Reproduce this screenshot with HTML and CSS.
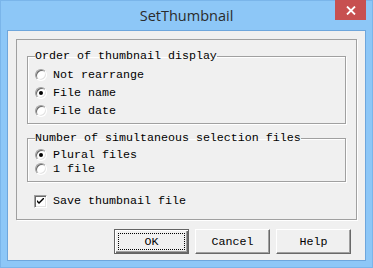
FILE: index.html
```html
<!DOCTYPE html>
<html>
<head>
<meta charset="utf-8">
<link rel="stylesheet" href="styles.css">
</head>
<body>
<div class="window">
  <div class="titlebar">
    <span class="title">SetThumbnail</span>
    <div class="close"><svg width="10" height="9" viewBox="0 0 10 9"><path d="M1 0.5 L9 8.5 M9 0.5 L1 8.5" stroke="#fff" stroke-width="1.8"/></svg></div>
  </div>
  <div class="client">
    <div class="panel">
      <fieldset class="group order">
        <legend>Order of thumbnail display</legend>
        <label class="opt"><span class="radio"></span>Not rearrange</label>
        <label class="opt"><span class="radio on"></span>File name</label>
        <label class="opt"><span class="radio"></span>File date</label>
      </fieldset>
      <fieldset class="group number">
        <legend>Number of simultaneous selection files</legend>
        <label class="opt"><span class="radio on"></span>Plural files</label>
        <label class="opt"><span class="radio"></span>1 file</label>
      </fieldset>
      <label class="check"><span class="box"><svg width="7" height="7" viewBox="0 0 7 7"><path d="M0 2 L0 4 L2 6 L7 1 L7 -1 L2 4 Z" fill="#000"/></svg></span>Save thumbnail file</label>
    </div>
    <div class="buttons">
      <div class="btn default"><span class="focus">OK</span></div>
      <div class="btn">Cancel</div>
      <div class="btn">Help</div>
    </div>
  </div>
</div>
</body>
</html>
```
FILE: styles.css
```css
* { box-sizing: border-box; }
html, body { margin: 0; padding: 0; }
body { background: #8dc7f7; }
.window {
  width: 373px; height: 268px;
  border: 1px solid #7ab5ea;
  background: #8dc7f7;
  padding: 0 6px 6px;
  display: flex; flex-direction: column;
  font-family: "Liberation Mono", monospace;
  font-size: 11.67px;
  color: #000;
}
.titlebar {
  height: 29px;
  display: grid;
  grid-template-columns: 1fr auto 1fr;
}
.title {
  grid-column: 2;
  align-self: center;
  font-family: "Open Sans", "Noto Sans", sans-serif;
  font-size: 14.5px;
  color: #2b2b2b;
  margin-top: -1px;
}
.close {
  grid-column: 3;
  justify-self: end;
  width: 31px; height: 20px;
  margin-top: -1px;
  background: #c75050;
  display: flex; align-items: center; justify-content: center;
}
.close svg { display: block; }
.client {
  flex: 1;
  border: 1px solid #6ea6dc;
  background: #f0f0f0;
  padding: 8px 8px 0 8px;
  display: flex; flex-direction: column;
}
.panel {
  height: 181px;
  border: 1px solid #a0a0a0;
  box-shadow: 1px 1px 0 #fff;
  padding: 9px 10px 0 10px;
  display: flex; flex-direction: column;
}
.group {
  margin: 0;
  padding: 3px 0 3px 0;
  border: 1px solid #a0a0a0;
  box-shadow: 1px 1px 0 #fff, inset 1px 1px 0 #fff;
  display: flex; flex-direction: column;
}
.group legend {
  padding: 0;
  margin-left: 7px;
  line-height: 14px;
}
.group.number { margin-top: 7px; padding-bottom: 5px; }
.opt {
  display: flex; align-items: center;
  height: 18px;
  padding-left: 7px;
  gap: 6px;
  line-height: 14px;
}
.number .opt { height: 14px; }
.radio {
  width: 12px; height: 12px;
  border-radius: 50%;
  background: #fff;
  border: 1px solid;
  border-color: #a0a0a0 #fff #fff #a0a0a0;
  box-shadow: inset 1px 1px 0 #696969, inset -1px -1px 0 #e3e3e3;
  display: flex; align-items: center; justify-content: center;
  flex: none;
}
.radio.on::after {
  content: "";
  width: 4px; height: 4px;
  border-radius: 50%;
  background: #000;
}
.check {
  display: flex; align-items: center;
  height: 14px;
  margin-top: 12px;
  padding-left: 7px;
  gap: 6px;
}
.box {
  width: 13px; height: 13px;
  background: #fff;
  border: 1px solid;
  border-color: #a0a0a0 #fff #fff #a0a0a0;
  box-shadow: inset 1px 1px 0 #696969, inset -1px -1px 0 #e3e3e3;
  display: flex; align-items: center; justify-content: center;
  flex: none;
}
.box svg { display: block; }
.buttons {
  display: flex; justify-content: flex-end;
  gap: 6px;
  margin-top: 9px;
  padding-right: 6px;
}
.btn {
  width: 75px; height: 25px;
  background: #f0f0f0;
  border: 1px solid;
  border-color: #fff #696969 #696969 #fff;
  box-shadow: inset -1px -1px 0 #a0a0a0;
  display: flex; align-items: center; justify-content: center;
  line-height: 14px;
}
.btn.default {
  border: 1px solid #646464;
  box-shadow: inset 1px 1px 0 #fff, inset -1px -1px 0 #696969, inset -2px -2px 0 #a0a0a0;
  padding: 3px;
}
.focus {
  flex: 1; align-self: stretch;
  border: 1px dotted #000;
  display: flex; align-items: center; justify-content: center;
}
```
